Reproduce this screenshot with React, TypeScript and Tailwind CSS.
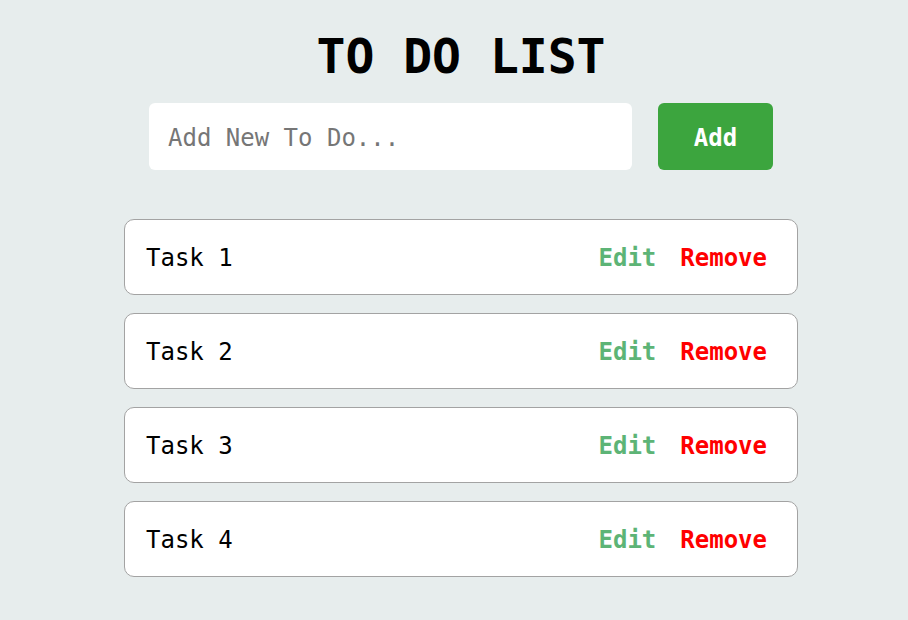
import React from "react";

const tasks = ["Task 1", "Task 2", "Task 3", "Task 4"];

const App = () => {
  return (
    <main
      className="min-h-[620px] bg-[#e7eded] pl-[14px] pt-[32px]"
      style={{ fontFamily: '"DejaVu Sans Mono", "Liberation Mono", monospace' }}
    >
      <div className="flex flex-col items-center">
        <h1 className="text-[48px] font-bold leading-[48px] text-black">TO DO LIST</h1>

        <div className="mt-[23px] flex gap-[26px]">
          <input
            type="text"
            placeholder="Add New To Do..."
            className="h-[67px] w-[483px] rounded-md bg-white px-[19px] pt-[2px] text-[24px] text-black outline-none placeholder:text-[#767676]"
          />
          <button className="h-[67px] w-[115px] rounded-md bg-[#3ca53e] pt-[2px] text-[24px] font-bold text-white">
            Add
          </button>
        </div>

        <ul className="mt-[49px] flex w-[674px] flex-col gap-[18px]">
          {tasks.map((task) => (
            <li
              key={task}
              className="flex h-[76px] items-center justify-between rounded-[10px] border border-[#a3a3a3] bg-white pl-[21px] pr-[30px] pt-[2px]"
            >
              <span className="text-[24px] text-black">{task}</span>
              <div className="flex gap-[24px] text-[24px] font-bold">
                <button className="text-[#5db476]">Edit</button>
                <button className="text-[#ff0000]">Remove</button>
              </div>
            </li>
          ))}
        </ul>
      </div>
    </main>
  );
};

export default App;
